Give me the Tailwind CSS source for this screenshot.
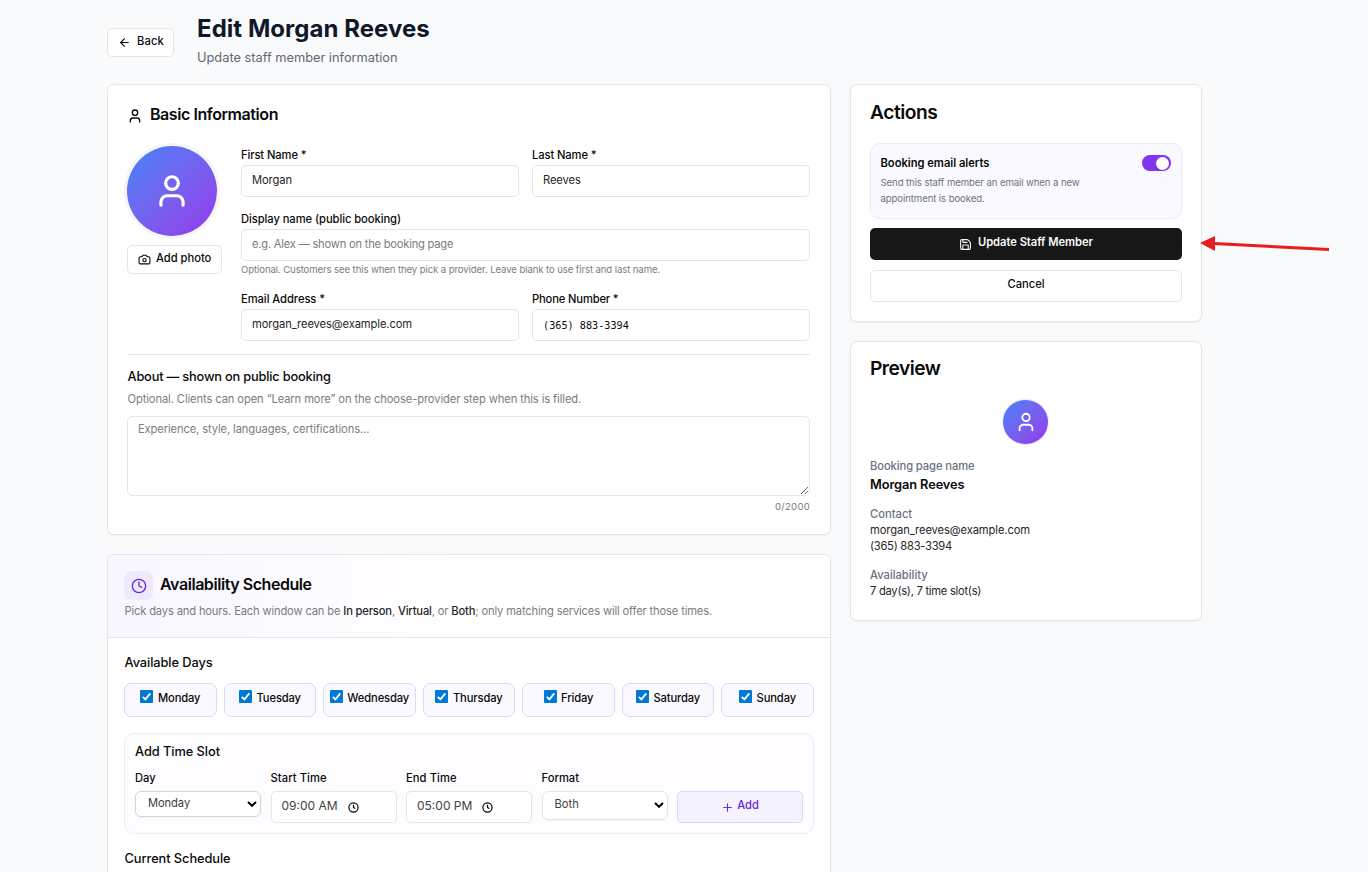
<!DOCTYPE html>
<html lang="en">
  <head>
    <meta charset="utf-8" />
    <title>Edit Staff Member</title>
    <script src="https://cdn.jsdelivr.net/npm/@tailwindcss/browser@4"></script>
  </head>
  <body
    class="relative h-screen overflow-hidden bg-[#f9fafc] font-['Inter',sans-serif] text-[11.2px] text-neutral-950"
  >
    <svg class="hidden">
      <symbol id="user" viewBox="0 0 24 24">
        <circle cx="12" cy="7" r="4" />
        <path d="M19 21v-2a4 4 0 0 0-4-4H9a4 4 0 0 0-4 4v2" />
      </symbol>
      <symbol id="clock" viewBox="0 0 24 24">
        <circle cx="12" cy="12" r="10" />
        <path d="M12 6v6l4 2" />
      </symbol>
      <symbol id="chevron" viewBox="0 0 10 6">
        <path d="M1 1l4 3.8L9 1" />
      </symbol>
      <symbol id="check" viewBox="0 0 13 13">
        <rect width="13" height="13" rx="1" fill="#0078d7" />
        <path d="M2.8 6.8l2.6 2.6 4.9-6" fill="none" stroke="#fff" stroke-width="1.8" />
      </symbol>
    </svg>

    <div class="ml-[107px] w-[1095px]">
      <!-- header -->
      <header class="flex h-[84px] items-start">
        <button
          class="mt-7 flex h-[29px] w-[67px] items-center rounded-[5px] border border-neutral-200 bg-white pl-[10px] font-medium"
        >
          <svg
            class="size-[13px]"
            viewBox="0 0 24 24"
            fill="none"
            stroke="currentColor"
            stroke-width="2"
            stroke-linecap="round"
            stroke-linejoin="round"
          >
            <path d="m12 19-7-7 7-7" />
            <path d="M19 12H5" />
          </svg>
          <span class="ml-[6px] pb-[2px] tracking-[0.013em]">Back</span>
        </button>
        <div class="ml-[23px] pt-[13px]">
          <h1 class="text-2xl leading-8 font-bold tracking-[0.002em] text-gray-900">
            Edit Morgan Reeves
          </h1>
          <p class="mt-[3px] text-[12.8px] leading-5 text-[#5f6774]">
            Update staff member information
          </p>
        </div>
      </header>

      <div class="flex items-start gap-[19px]">
        <main class="w-[724px] shrink-0">
          <!-- basic information -->
          <section
            class="rounded-[7px] border border-neutral-200 bg-white py-[19px] pr-5 pl-[19px] shadow-xs"
          >
            <h2
              class="flex h-[22px] items-center text-base leading-[22px] font-semibold tracking-[-0.027em]"
            >
              <svg
                class="mt-[2px] size-4"
                fill="none"
                stroke="currentColor"
                stroke-width="2"
                stroke-linecap="round"
                stroke-linejoin="round"
              >
                <use href="#user" />
              </svg>
              <span class="ml-[7px] pb-[2px]">Basic Information</span>
            </h2>
            <div class="mt-5 flex">
              <div class="w-[114px] shrink-0">
                <div
                  class="flex size-[90px] items-center justify-center rounded-full bg-linear-to-br from-[#3b82f6] to-[#9333ea] text-white ring-3 ring-neutral-100"
                >
                  <svg
                    class="size-[38px]"
                    fill="none"
                    stroke="currentColor"
                    stroke-width="2"
                    stroke-linecap="round"
                    stroke-linejoin="round"
                  >
                    <use href="#user" />
                  </svg>
                </div>
                <button
                  class="mt-[9px] flex h-[29px] w-[95px] items-center rounded-[5px] border border-neutral-200 bg-white pl-[10px] font-medium"
                >
                  <svg
                    class="size-[13px]"
                    viewBox="0 0 24 24"
                    fill="none"
                    stroke="currentColor"
                    stroke-width="2"
                    stroke-linecap="round"
                    stroke-linejoin="round"
                  >
                    <path
                      d="M14.5 4h-5L7 7H4a2 2 0 0 0-2 2v9a2 2 0 0 0 2 2h16a2 2 0 0 0 2-2V9a2 2 0 0 0-2-2h-3l-2.5-3z"
                    />
                    <circle cx="12" cy="13" r="3" />
                  </svg>
                  <span class="ml-[5px] pb-[2px] tracking-[-0.002em]">Add photo</span>
                </button>
              </div>
              <div class="grid w-[569px] grid-cols-2 gap-[13px]">
                <label class="block">
                  <span class="block h-[19px] leading-[18px] font-medium tracking-[-0.009em]">First Name *</span>
                  <input
                    class="block h-8 w-full rounded-[5px] border border-neutral-200 px-[10px] pb-[2px] tracking-[-0.009em] text-neutral-800"
                    value="Morgan"
                  />
                </label>
                <label class="block">
                  <span class="block h-[19px] leading-[18px] font-medium tracking-[-0.009em]">Last Name *</span>
                  <input
                    class="block h-8 w-full rounded-[5px] border border-neutral-200 px-[10px] pb-[2px] tracking-[-0.009em] text-neutral-800"
                    value="Reeves"
                  />
                </label>
                <label class="col-span-2 block">
                  <span class="block h-[19px] leading-[18px] font-medium tracking-[-0.006em]">Display name (public booking)</span>
                  <input
                    class="block h-8 w-full rounded-[5px] border border-neutral-200 px-[10px] pb-[2px] tracking-[-0.021em] placeholder:text-[#7c7c7c]"
                    placeholder="e.g. Alex — shown on the booking page"
                  />
                  <span class="block h-4 text-[9.6px] leading-[17px] tracking-[-0.011em] text-[#7c7c7c]"
                    >Optional. Customers see this when they pick a provider. Leave blank to use first and last name.</span
                  >
                </label>
                <label class="block">
                  <span class="block h-[19px] leading-[18px] font-medium tracking-[-0.005em]">Email Address *</span>
                  <input
                    class="block h-8 w-full rounded-[5px] border border-neutral-200 px-[10px] pb-[2px] tracking-[-0.009em] text-neutral-800"
                    value="morgan_reeves@example.com"
                  />
                </label>
                <label class="block">
                  <span class="block h-[19px] leading-[18px] font-medium tracking-[-0.014em]">Phone Number *</span>
                  <input
                    class="block h-8 w-full rounded-[5px] border border-neutral-200 px-[10px] font-['DejaVu_Sans_Mono',monospace] text-[10.2px]"
                    value="(365) 883-3394"
                  />
                </label>
              </div>
            </div>
            <div class="mt-[13px] border-t border-neutral-200 pt-3">
              <h3 class="pl-[0.5px] text-[12.8px] leading-5 font-medium tracking-[-0.015em]">
                About — shown on public booking
              </h3>
              <p class="mt-1 pl-[0.5px] leading-4 tracking-[-0.01em] text-[#7c7c7c]">
                Optional. Clients can open “Learn more” on the choose-provider step when this is filled.
              </p>
              <textarea
                class="mt-[9px] block h-20 w-full resize-y rounded-[5px] border border-neutral-200 px-[10px] py-1 leading-4 tracking-[-0.011em] placeholder:text-[#7c7c7c]"
                placeholder="Experience, style, languages, certifications..."
              ></textarea>
              <p class="mt-[3px] text-right text-[9.6px] leading-4 tracking-[0.026em] text-[#7c7c7c]">
                0/2000
              </p>
            </div>
          </section>

          <!-- availability schedule -->
          <section
            class="mt-[19px] h-[318px] overflow-hidden rounded-t-[7px] border border-b-0 border-neutral-200 bg-white shadow-xs"
          >
            <div
              class="h-[83px] border-b border-neutral-200 bg-linear-to-r from-[#f8f6ff] to-white to-50% px-4 pt-4"
            >
              <div class="flex h-[29px] items-center">
                <div
                  class="flex size-[29px] items-center justify-center rounded-lg bg-[#ede9fe] text-[#6d28d9]"
                >
                  <svg
                    class="size-4"
                    fill="none"
                    stroke="currentColor"
                    stroke-width="2"
                    stroke-linecap="round"
                    stroke-linejoin="round"
                  >
                    <use href="#clock" />
                  </svg>
                </div>
                <h2 class="ml-[7px] pb-[4px] text-base font-semibold tracking-[-0.028em]">
                  Availability Schedule
                </h2>
              </div>
              <p class="mt-[2px] pl-[0.5px] leading-[18px] tracking-[-0.015em] text-[#7c7c7c]">
                Pick days and hours. Each window can be
                <b class="font-medium text-neutral-800">In person</b>,
                <b class="font-medium text-neutral-800">Virtual</b>, or
                <b class="font-medium text-neutral-800">Both</b>; only matching services will offer those times.
              </p>
            </div>
            <div class="px-4 pt-[15px]">
              <h3 class="pl-[0.5px] text-[12.8px] leading-5 font-medium tracking-[-0.006em]">
                Available Days
              </h3>
              <div
                class="mt-[10px] grid grid-cols-7 gap-[6.6px] font-medium tracking-[-0.012em]"
              >
                <label class="flex h-[34px] justify-center gap-[4.5px] rounded-[7px] border border-[#ddd6fe] bg-[#faf9ff] pt-[6px]">
                  <svg class="size-[13px]"><use href="#check" /></svg>
                  <span class="leading-[17px]">Monday</span>
                </label>
                <label class="flex h-[34px] justify-center gap-[4.5px] rounded-[7px] border border-[#ddd6fe] bg-[#faf9ff] pt-[6px]">
                  <svg class="size-[13px]"><use href="#check" /></svg>
                  <span class="leading-[17px]">Tuesday</span>
                </label>
                <label class="flex h-[34px] justify-center gap-[4.5px] rounded-[7px] border border-[#ddd6fe] bg-[#faf9ff] pt-[6px]">
                  <svg class="size-[13px]"><use href="#check" /></svg>
                  <span class="leading-[17px]">Wednesday</span>
                </label>
                <label class="flex h-[34px] justify-center gap-[4.5px] rounded-[7px] border border-[#ddd6fe] bg-[#faf9ff] pt-[6px]">
                  <svg class="size-[13px]"><use href="#check" /></svg>
                  <span class="leading-[17px]">Thursday</span>
                </label>
                <label class="flex h-[34px] justify-center gap-[4.5px] rounded-[7px] border border-[#ddd6fe] bg-[#faf9ff] pt-[6px]">
                  <svg class="size-[13px]"><use href="#check" /></svg>
                  <span class="leading-[17px]">Friday</span>
                </label>
                <label class="flex h-[34px] justify-center gap-[4.5px] rounded-[7px] border border-[#ddd6fe] bg-[#faf9ff] pt-[6px]">
                  <svg class="size-[13px]"><use href="#check" /></svg>
                  <span class="leading-[17px]">Saturday</span>
                </label>
                <label class="flex h-[34px] justify-center gap-[4.5px] rounded-[7px] border border-[#ddd6fe] bg-[#faf9ff] pt-[6px]">
                  <svg class="size-[13px]"><use href="#check" /></svg>
                  <span class="leading-[17px]">Sunday</span>
                </label>
              </div>

              <div
                class="mt-4 h-[101px] rounded-[10px] border border-[#ede9fe] bg-[#fdfcff] px-[10px] pt-2"
              >
                <h3 class="text-[12.8px] leading-5 font-medium tracking-[-0.004em]">
                  Add Time Slot
                </h3>
                <div class="mt-2 grid grid-cols-5 gap-[9.5px]">
                  <div>
                    <div class="h-[21px] leading-4 font-medium">Day</div>
                    <button
                      class="flex h-[26px] w-full items-center justify-between rounded-[6px] border border-neutral-300 bg-white pr-[3px] pb-px pl-3 tracking-[-0.009em] text-neutral-700 shadow-xs"
                    >
                      Monday
                      <svg class="h-[6px] w-[10px] text-black" fill="none" stroke="currentColor" stroke-width="2">
                        <use href="#chevron" />
                      </svg>
                    </button>
                  </div>
                  <div>
                    <div class="h-[21px] leading-4 font-medium tracking-[0.006em]">Start Time</div>
                    <div
                      class="flex h-8 items-center gap-[10px] rounded-[5px] border border-neutral-200 bg-white pb-[3px] pl-[10px] text-xs text-neutral-700"
                    >
                      09:00 AM
                      <svg class="mt-[3px] size-[11px] overflow-visible text-black" fill="none" stroke="currentColor" stroke-width="2.6">
                        <use href="#clock" />
                      </svg>
                    </div>
                  </div>
                  <div>
                    <div class="h-[21px] leading-4 font-medium tracking-[0.006em]">End Time</div>
                    <div
                      class="flex h-8 items-center gap-[10px] rounded-[5px] border border-neutral-200 bg-white pb-[3px] pl-[10px] text-xs text-neutral-700"
                    >
                      05:00 PM
                      <svg class="mt-[3px] size-[11px] overflow-visible text-black" fill="none" stroke="currentColor" stroke-width="2.6">
                        <use href="#clock" />
                      </svg>
                    </div>
                  </div>
                  <div>
                    <div class="h-[21px] leading-4 font-medium">Format</div>
                    <button
                      class="flex h-[29px] w-full items-center justify-between rounded-[7px] border border-neutral-200 bg-white pr-[3px] pb-[2px] pl-3 text-neutral-700 shadow-xs"
                    >
                      Both
                      <svg class="mt-px h-[6px] w-[10px] text-black" fill="none" stroke="currentColor" stroke-width="2">
                        <use href="#chevron" />
                      </svg>
                    </button>
                  </div>
                  <div class="pt-[21px]">
                    <button
                      class="flex h-8 w-full items-center justify-center rounded-[5px] border border-[#ddd6fe] bg-[#f5f3ff] font-medium text-[#6d28d9]"
                    >
                      <svg
                        class="mt-px size-[13px]"
                        viewBox="0 0 24 24"
                        fill="none"
                        stroke="currentColor"
                        stroke-width="2"
                        stroke-linecap="round"
                      >
                        <path d="M5 12h14M12 5v14" />
                      </svg>
                      <span class="ml-[3px] pb-[3px]">Add</span>
                    </button>
                  </div>
                </div>
              </div>
              <h3 class="mt-[15px] pl-[0.5px] text-[12.8px] leading-5 font-medium tracking-[-0.005em]">
                Current Schedule
              </h3>
            </div>
          </section>
        </main>

        <aside class="w-[352px] shrink-0">
          <!-- actions -->
          <section
            class="h-[238px] rounded-[7px] border border-neutral-200 bg-white px-[19px] pt-[15px] shadow-xs"
          >
            <h2 class="text-[19.2px] leading-6 font-semibold tracking-[-0.025em]">Actions</h2>
            <div
              class="mt-[19px] flex h-[76px] justify-between rounded-[10px] border border-[#ede9fe] bg-[#faf9ff] pt-[10px] pr-[10px] pl-[9.5px]"
            >
              <div>
                <div class="leading-[18px] font-semibold tracking-[-0.002em]">Booking email alerts</div>
                <p class="mt-[3px] w-[220px] text-[9.6px] leading-4 tracking-[-0.01em] text-gray-500">
                  Send this staff member an email when a new appointment is booked.
                </p>
              </div>
              <div
                class="mt-px flex h-4 w-[29px] items-center justify-end rounded-full bg-[#8036ec] pr-[2px]"
              >
                <div class="size-[13px] rounded-full bg-white shadow-lg"></div>
              </div>
            </div>
            <button
              class="mt-[9px] flex h-8 w-full items-center justify-center rounded-[5px] bg-neutral-900 font-semibold text-neutral-50"
            >
              <svg
                class="mt-px size-[13px]"
                viewBox="0 0 24 24"
                fill="none"
                stroke="currentColor"
                stroke-width="2"
                stroke-linecap="round"
                stroke-linejoin="round"
              >
                <path
                  d="M15.2 3a2 2 0 0 1 1.4.6l3.8 3.8a2 2 0 0 1 .6 1.4V19a2 2 0 0 1-2 2H5a2 2 0 0 1-2-2V5a2 2 0 0 1 2-2z"
                />
                <path d="M17 21v-7a1 1 0 0 0-1-1H8a1 1 0 0 0-1 1v7" />
                <path d="M7 3v4a1 1 0 0 0 1 1h7" />
              </svg>
              <span class="ml-[6px] pb-[3px] tracking-[-0.003em]">Update Staff Member</span>
            </button>
            <button
              class="mt-[10px] h-8 w-full rounded-[5px] border border-neutral-200 bg-white pb-[3px] font-medium"
            >
              Cancel
            </button>
          </section>

          <!-- preview -->
          <section
            class="mt-[19px] h-[280px] rounded-[7px] border border-neutral-200 bg-white px-[19px] pt-[14px] shadow-xs"
          >
            <h2 class="text-[19.2px] leading-6 font-semibold tracking-[-0.028em]">Preview</h2>
            <div class="mt-5 flex justify-center pr-px">
              <div
                class="flex h-[44px] w-[45px] items-center justify-center rounded-full bg-linear-to-br from-[#3b82f6] to-[#9333ea] text-white ring-1 ring-[#ede9fe]"
              >
                <svg
                  class="size-[22px]"
                  fill="none"
                  stroke="currentColor"
                  stroke-width="2"
                  stroke-linecap="round"
                  stroke-linejoin="round"
                >
                  <use href="#user" />
                </svg>
              </div>
            </div>
            <div class="mt-[14px] leading-4 font-medium tracking-[-0.008em] text-gray-500">Booking page name</div>
            <div class="mt-px text-[12.8px] leading-5 font-semibold tracking-[-0.008em]">Morgan Reeves</div>
            <div class="mt-[11px] leading-4 font-medium text-gray-500">Contact</div>
            <div class="leading-4 tracking-[-0.009em] text-neutral-800">morgan_reeves@example.com</div>
            <div class="leading-4 tracking-[-0.024em] text-neutral-800">(365) 883-3394</div>
            <div class="mt-[13px] leading-4 font-medium text-gray-500">Availability</div>
            <div class="leading-4 tracking-[-0.024em] text-neutral-800">7 day(s), 7 time slot(s)</div>
          </section>
        </aside>
      </div>
    </div>

    <!-- arrow pointing at the update button -->
    <svg class="absolute top-[230px] left-[1195px] h-[30px] w-[140px]" viewBox="0 0 140 30">
      <path d="M5 13L20 6v15z" fill="#e81c1c" />
      <path d="M19 12l115 6v3l-115-6z" fill="#e81c1c" />
    </svg>
  </body>
</html>
